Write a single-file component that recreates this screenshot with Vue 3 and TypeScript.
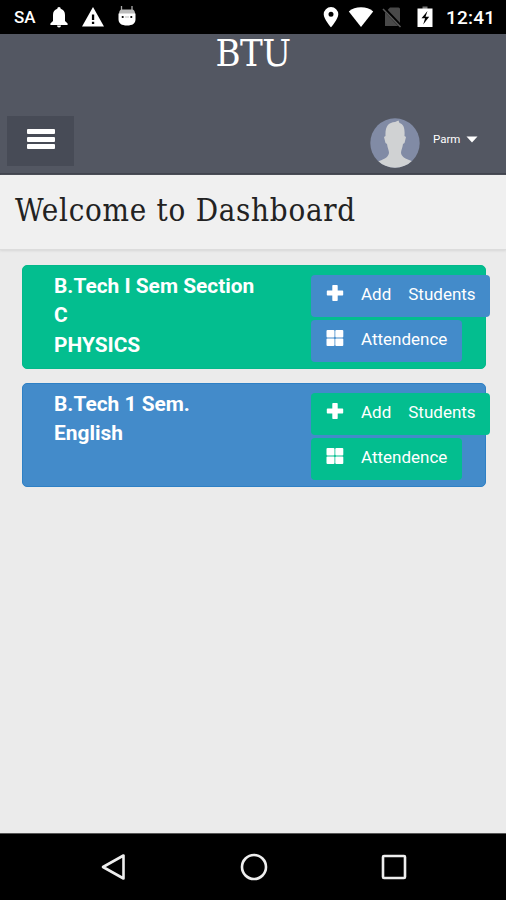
<script setup lang="ts">
interface Course {
  id: number
  lines: string[]
  tone: 'green' | 'blue'
}

const courses: Course[] = [
  { id: 1, lines: ['B.Tech I Sem Section C', 'PHYSICS'], tone: 'green' },
  { id: 2, lines: ['B.Tech 1 Sem.', 'English'], tone: 'blue' },
]
</script>

<template>
  <div class="screen">
    <div class="status">
      <span class="sa">SA</span>
      <svg class="bell" width="20" height="22" viewBox="0 0 20 22"><path fill="#fff" d="M10 1a1.7 1.7 0 0 1 1.7 1.8C14.600 3.600 16 6 16 9v6l2.600 2.500V19H1.400v-1.500L4 15V9c0-3 1.400-5.400 4.300-6.200A1.700 1.700 0 0 1 10 1zM8 19.500h4a2 2 0 0 1-4 0z" /></svg>
      <svg class="warn" width="24" height="22" viewBox="0 0 24 22"><path fill="#fff" d="M12 1 23 20.500H1z" /><path fill="#000" d="M10.900 8.500h2.300V14h-2.300zM10.900 15.700h2.300V18h-2.300z" /></svg>
      <svg class="robot" width="20" height="22" viewBox="0 0 20 22"><path d="M4.500 0v5M15 0v5" stroke="#aaa" stroke-width="1.300" /><path fill="#bbb" d="M2 8c0-3 1-4.500 3-4.500h10c2 0 3 1.500 3 4.500z" /><path fill="#fff" d="M1.500 7.500h17V13c0 4.500-3 6.500-8.500 6.500S1.500 17.500 1.500 13z" /><circle cx="5.700" cy="11" r="1.100" /><circle cx="14.300" cy="11" r="1.100" /><path d="M8 11h4" stroke="#bbb" /></svg>
      <span class="fill"></span>
      <svg class="pin" width="18" height="22" viewBox="0 0 18 22"><path fill="#fff" fill-rule="evenodd" d="M9 1a7.300 7.300 0 0 1 7.300 7.300C16.300 13 9 21.300 9 21.300S1.700 13 1.700 8.300A7.300 7.300 0 0 1 9 1zm0 4.800a2.500 2.500 0 1 0 0 5 2.500 2.500 0 0 0 0-5z" /></svg>
      <svg class="wifi" width="26" height="22" viewBox="0 0 26 22"><path fill="#fff" d="M13 21 .8 5.400C4 2.700 8.200 1.300 13 1.300S22 2.700 25.200 5.400z" /></svg>
      <svg class="sim" width="20" height="22" viewBox="0 0 20 22"><path fill="#494949" d="M8 1.500h8.500a1.500 1.500 0 0 1 1.500 1.500v17H3V6.500z" /><path d="M1 1.500 19.500 21" stroke="#000" stroke-width="3.500" /><path d="M1 3 18.500 21" stroke="#5a5a5a" stroke-width="1.500" /></svg>
      <svg class="battery" width="16" height="22" viewBox="0 0 16 22"><path fill="#777" d="M5.500.5h5V3h-5z" /><path fill="#fff" d="M.5 2.500h15V21H.5z" /><path d="M10.500 5 4.500 12.300h3.600L6.200 18.500l6-7.800H8.500z" /></svg>
      <span class="time">12:41</span>
    </div>

    <header class="header">
      <div class="brand">BTU</div>
      <div class="toolbar">
        <button class="menu" aria-label="Menu"><i></i><i></i><i></i></button>
        <div class="user">
          <svg class="avatar" width="50" height="50" viewBox="0 0 50 50">
            <defs><clipPath id="disc"><circle cx="25" cy="25" r="24.700" /></clipPath></defs>
            <g clip-path="url(#disc)">
              <path fill="#818ba5" d="M0 0h50v50H0z" />
              <path fill="#d0d2d3" d="M15.500 18C15 8 18.500 4.500 25 4l3.500-1.500 1 2.500c4.500 1.500 5.500 5.500 5 13l1.500 1-1.500 6-1.500 1c-.5 4-2 6-2 9 1 5 6 6 11.500 8.500V52H7v-8c6-2.500 11-4 12-9 0-3-1.500-5-2-9l-1.500-1-1.500-6z" />
            </g>
          </svg>
          <span class="name">Parm</span>
          <svg class="caret" width="12" height="7" viewBox="0 0 12 7"><path fill="#fff" d="M.5.500h11L6 6.500z" /></svg>
        </div>
      </div>
    </header>

    <div class="heading"><h1>Welcome to Dashboard</h1></div>

    <main class="courses">
      <section v-for="course in courses" :key="course.id" class="card" :class="course.tone">
        <div class="info">
          <div v-for="line in course.lines" :key="line">{{ line }}</div>
        </div>
        <div class="actions">
          <button class="action add">
            <svg width="18" height="18" viewBox="0 0 18 18"><path fill="#fff" d="M7 1h4a.7.700 0 0 1 .7.700V6.500h4.800a.7.700 0 0 1 .7.700v3.600a.7.700 0 0 1-.7.700h-4.800v4.800a.7.700 0 0 1-.7.700H7a.7.700 0 0 1-.7-.7v-4.800H1.500a.7.700 0 0 1-.7-.7V7.200a.7.700 0 0 1 .7-.7h4.800V1.700A.7.700 0 0 1 7 1z" /></svg>
            <span class="label">Add</span><span class="label second">Students</span>
          </button>
          <button class="action attend">
            <svg width="18" height="18" viewBox="0 0 18 18" fill="#fff"><rect x=".5" y="1" width="8" height="7.500" rx="1" /><rect x="9.300" y="1" width="8" height="7.500" rx="1" /><rect x=".5" y="9.400" width="8" height="7.500" rx="1" /><rect x="9.300" y="9.400" width="8" height="7.500" rx="1" /></svg>
            <span class="label">Attendence</span>
          </button>
        </div>
      </section>
    </main>

    <nav class="navbar">
      <svg width="28" height="30" viewBox="0 0 28 30"><path d="M24.500 3.500v23L4 15z" fill="none" stroke="#eee" stroke-width="2.600" stroke-linejoin="round" /></svg>
      <svg width="30" height="30" viewBox="0 0 30 30"><circle cx="15" cy="15" r="12" fill="none" stroke="#eee" stroke-width="2.600" /></svg>
      <svg width="28" height="30" viewBox="0 0 28 30"><rect x="3" y="4" width="22" height="22" rx="1" fill="none" stroke="#eee" stroke-width="2.600" /></svg>
    </nav>
  </div>
</template>

<style>
body { margin: 0; background: #ebebeb; }
</style>

<style scoped>
.screen {
  display: flex;
  flex-direction: column;
  width: 506px;
  height: 900px;
  overflow: hidden;
  background: #ebebeb;
  font-family: Roboto, sans-serif;
  color: #fff;
}
svg { display: block; flex: none; }
button { border: 0; font: inherit; color: inherit; }
.status {
  display: flex;
  align-items: center;
  box-sizing: border-box;
  height: 34px;
  padding: 0 11px 0 14px;
  background: #000;
  flex: none;
}
.sa { width: 35px; font-size: 17px; font-weight: 500; }
.warn { margin-left: 12px; }
.robot { margin-left: 12px; }
.fill { flex: 1; }
.wifi { margin-left: 8px; }
.sim { margin-left: 8px; }
.battery { margin-left: 15px; }
.time { margin-left: 13px; width: 49px; padding-top: 1px; font-size: 19px; font-weight: 500; letter-spacing: .2px; white-space: nowrap; }
.header {
  display: flex;
  flex-direction: column;
  box-sizing: border-box;
  height: 141px;
  background: #535762;
  border-bottom: 2px solid #41444e;
  flex: none;
}
.brand {
  height: 82px;
  line-height: 39px;
  text-align: center;
  font-family: "DejaVu Serif Condensed", "DejaVu Serif", serif;
  font-stretch: condensed;
  font-size: 38px;
  letter-spacing: -.6px;
}
.toolbar {
  display: flex;
  justify-content: space-between;
  padding: 0 28px 0 7px;
}
.menu {
  display: flex;
  flex-direction: column;
  align-items: center;
  gap: 2.500px;
  width: 67px;
  height: 50px;
  padding: 13px 0 0;
  background: #474b56;
}
.menu i { width: 28px; height: 5px; background: #fff; border-radius: 1px; }
.user { display: flex; }
.avatar { margin-top: 2px; }
.name { margin: 16px 0 0 13px; width: 33px; font-size: 11.500px; line-height: 14px; }
.caret { margin-top: 20px; }
.heading {
  box-sizing: border-box;
  height: 75px;
  padding: 16px 15px 0;
  background: #f0f0f0;
  border-bottom: 1px solid #dcdcdc;
  box-shadow: 0 1px 2px #d6d6d6;
  flex: none;
}
h1 {
  margin: 0;
  font-family: "DejaVu Serif Condensed", "DejaVu Serif", serif;
  font-stretch: condensed;
  font-weight: 400;
  font-size: 31px;
  line-height: 38px;
  letter-spacing: .73px;
  color: #222;
  white-space: nowrap;
}
.courses {
  display: flex;
  flex-direction: column;
  flex: 1;
  gap: 14px;
  padding: 15px 20px 0 22px;
}
.card {
  display: flex;
  box-sizing: border-box;
  width: 464px;
  height: 104px;
  padding: 5px 0 0 31px;
  border: 1px solid;
  border-radius: 5px;
}
.green { background: #03be8f; border-color: #03b88a; }
.blue { background: #438bca; border-color: #2e80c5; }
.info { width: 212px; margin-right: 45px; padding-top: 1px; font-size: 20.900px; font-weight: 700; line-height: 29.400px; }
.actions { display: flex; flex-direction: column; align-items: flex-start; gap: 3px; width: 180px; padding-top: 4px; margin-right: -6px; flex: none; }
.action {
  display: flex;
  align-items: flex-start;
  height: 42px;
  padding: 9px 0 0 15px;
  border-radius: 4px;
  white-space: nowrap;
}
.green .action { background: #438bca; }
.blue .action { background: #03be8f; }
.add { width: 179px; }
.attend { width: 151px; }
.label { margin-left: 17px; font-size: 17px; line-height: 20px; }
.navbar {
  display: flex;
  justify-content: space-between;
  box-sizing: border-box;
  height: 67px;
  padding: 18px 98px 0 99px;
  background: #000;
  border-top: 1px solid #555;
  flex: none;
}
</style>
